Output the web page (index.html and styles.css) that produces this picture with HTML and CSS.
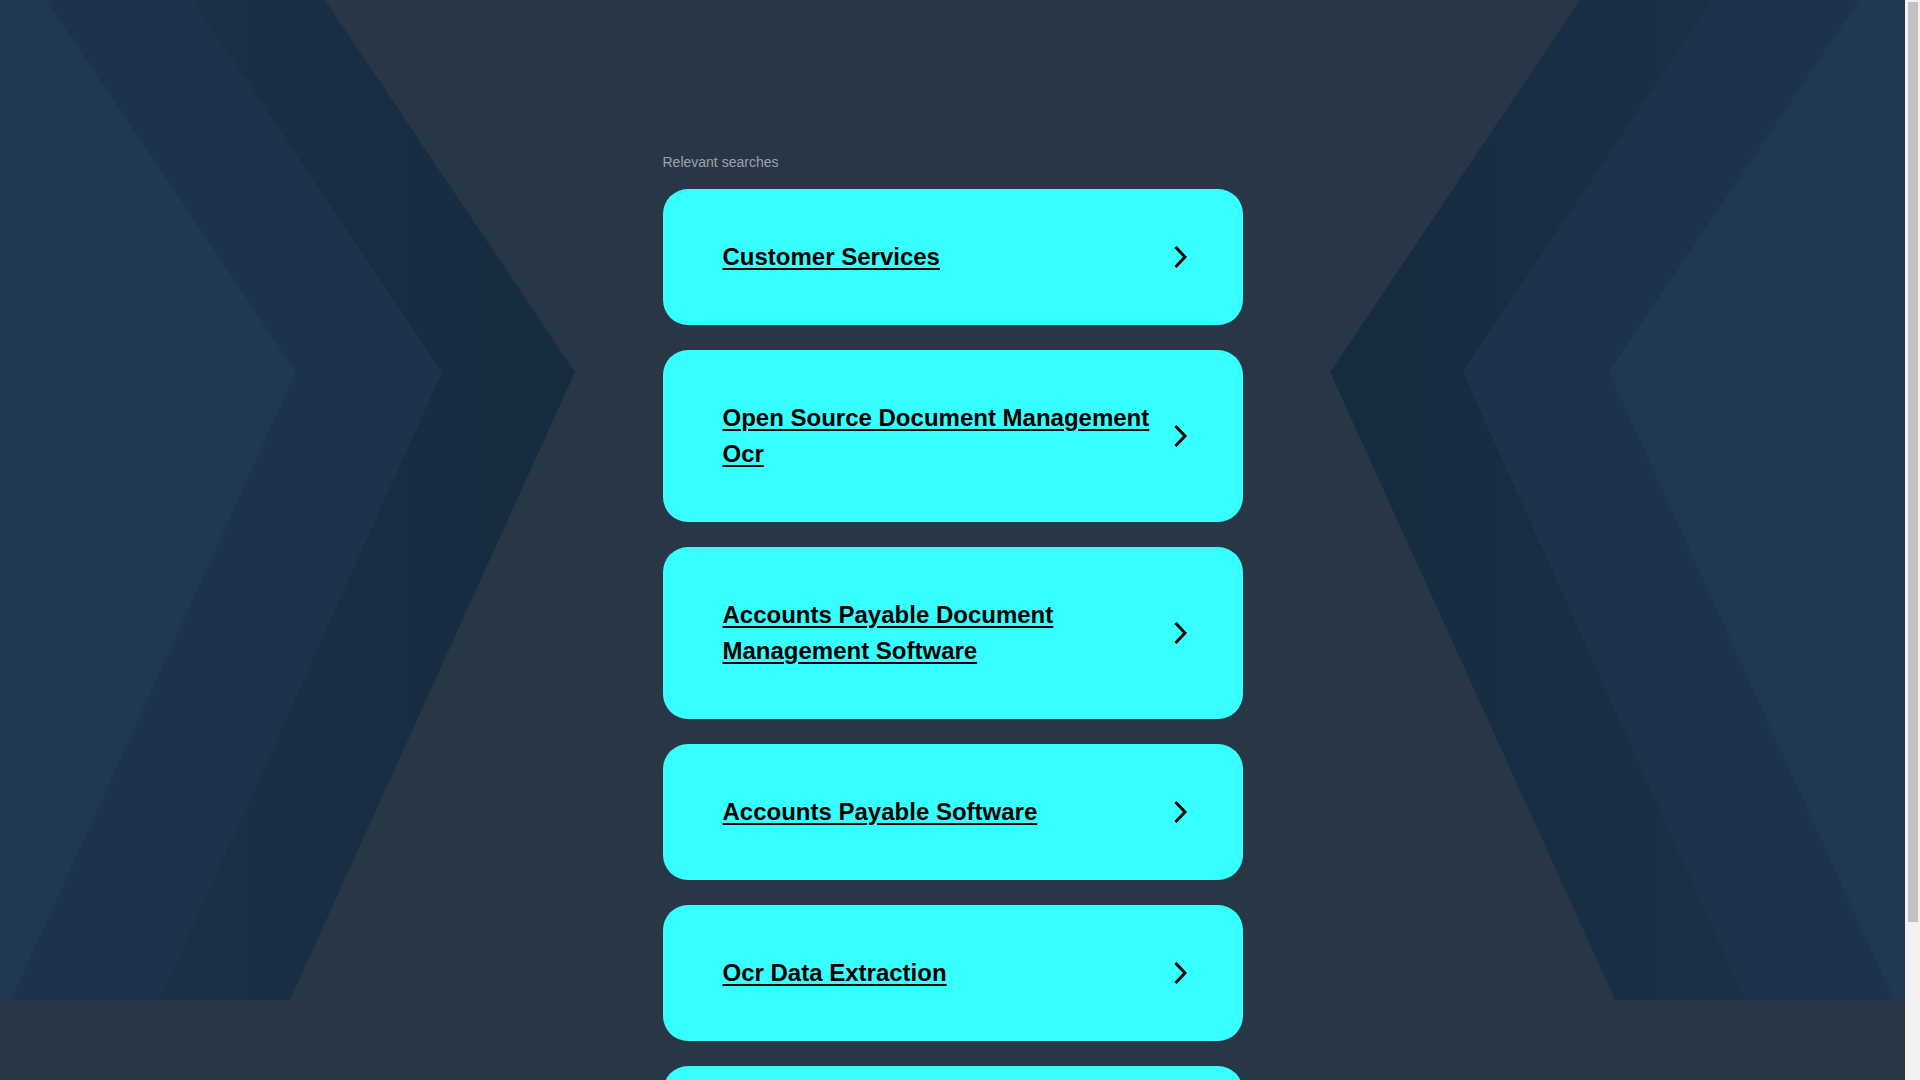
FILE: index.html
```html
<!DOCTYPE html>
<html lang="en">
<head>
<meta charset="utf-8">
<title>Relevant searches</title>
<link rel="stylesheet" href="styles.css">
</head>
<body>
<svg class="backdrop" viewBox="0 0 1905 1000" preserveAspectRatio="none" aria-hidden="true">
  <defs>
    <linearGradient id="gl" x1="0" y1="0" x2="1" y2="0">
      <stop offset="0" stop-color="#1c3249"/>
      <stop offset="1" stop-color="#172b3f"/>
    </linearGradient>
    <linearGradient id="gr" x1="1" y1="0" x2="0" y2="0">
      <stop offset="0" stop-color="#1c3249"/>
      <stop offset="1" stop-color="#172b3f"/>
    </linearGradient>
  </defs>
  <polygon points="0,0 325,0 575,372 290,1000 0,1000" fill="url(#gl)"/>
  <polygon points="0,0 193,0 442,372 160,1000 0,1000" fill="#1d334b"/>
  <polygon points="0,0 46,0 296,372 11,1000 0,1000" fill="#1f3951"/>
  <polygon points="1905,0 1580,0 1330,372 1615,1000 1905,1000" fill="url(#gr)"/>
  <polygon points="1905,0 1712,0 1463,372 1745,1000 1905,1000" fill="#1d334b"/>
  <polygon points="1905,0 1859,0 1609,372 1894,1000 1905,1000" fill="#1f3951"/>
</svg>
<main class="content">
  <p class="label">Relevant searches</p>
  <ul class="results">
    <li><a class="card" href="#"><span class="title">Customer Services</span><svg class="chev" viewBox="0 0 14 24" width="14" height="24"><path d="M3.5 3 L12 12 L3.5 21"/></svg></a></li>
    <li><a class="card" href="#"><span class="title">Open Source Document Management Ocr</span><svg class="chev" viewBox="0 0 14 24" width="14" height="24"><path d="M3.5 3 L12 12 L3.5 21"/></svg></a></li>
    <li><a class="card" href="#"><span class="title">Accounts Payable Document Management Software</span><svg class="chev" viewBox="0 0 14 24" width="14" height="24"><path d="M3.5 3 L12 12 L3.5 21"/></svg></a></li>
    <li><a class="card" href="#"><span class="title">Accounts Payable Software</span><svg class="chev" viewBox="0 0 14 24" width="14" height="24"><path d="M3.5 3 L12 12 L3.5 21"/></svg></a></li>
    <li><a class="card" href="#"><span class="title">Ocr Data Extraction</span><svg class="chev" viewBox="0 0 14 24" width="14" height="24"><path d="M3.5 3 L12 12 L3.5 21"/></svg></a></li>
    <li><a class="card" href="#"><span class="title">Document Management System</span><svg class="chev" viewBox="0 0 14 24" width="14" height="24"><path d="M3.5 3 L12 12 L3.5 21"/></svg></a></li>
  </ul>
</main>
<div class="scrollbar" aria-hidden="true"><div class="thumb"></div></div>
</body>
</html>
```
FILE: styles.css
```css
html, body {
  margin: 0;
  padding: 0;
}
html {
  background: #283746;
}
body {
  margin-right: 15px;
  background: #283746;
  font-family: "Liberation Sans", Arial, sans-serif;
  position: relative;
  min-height: 100vh;
}
.backdrop {
  position: absolute;
  top: 0;
  left: 0;
  width: 100%;
  height: 1000px;
  z-index: 0;
  display: block;
}
.content {
  position: relative;
  z-index: 1;
  width: 580px;
  margin: 0 auto;
  padding: 154px 0 60px;
}
.label {
  margin: 0 0 19px;
  font-size: 14px;
  line-height: 16px;
  color: #9ea3a8;
}
.results {
  list-style: none;
  margin: 0;
  padding: 0;
  display: flex;
  flex-direction: column;
  gap: 25px;
}
.card {
  display: flex;
  align-items: center;
  gap: 16px;
  padding: 50px 56px 50px 60px;
  background: #38ffff;
  border-radius: 25px;
  color: #000;
  text-decoration: none;
}
.title {
  flex: 1;
  font-size: 24px;
  line-height: 36px;
  font-weight: bold;
  text-decoration: underline;
  text-decoration-thickness: 2px;
  text-underline-offset: 3px;
}
.chev {
  flex: none;
  display: block;
}
.chev path {
  fill: none;
  stroke: #000;
  stroke-width: 3;
  stroke-linecap: square;
  stroke-linejoin: miter;
}
.scrollbar {
  position: fixed;
  top: 0;
  right: 0;
  width: 15px;
  height: 100vh;
  background: #f1f1f1;
  z-index: 5;
}
.thumb {
  margin: 2px 2px 0 3px;
  height: 920px;
  background: #c1c1c1;
  border-radius: 0;
}
```
